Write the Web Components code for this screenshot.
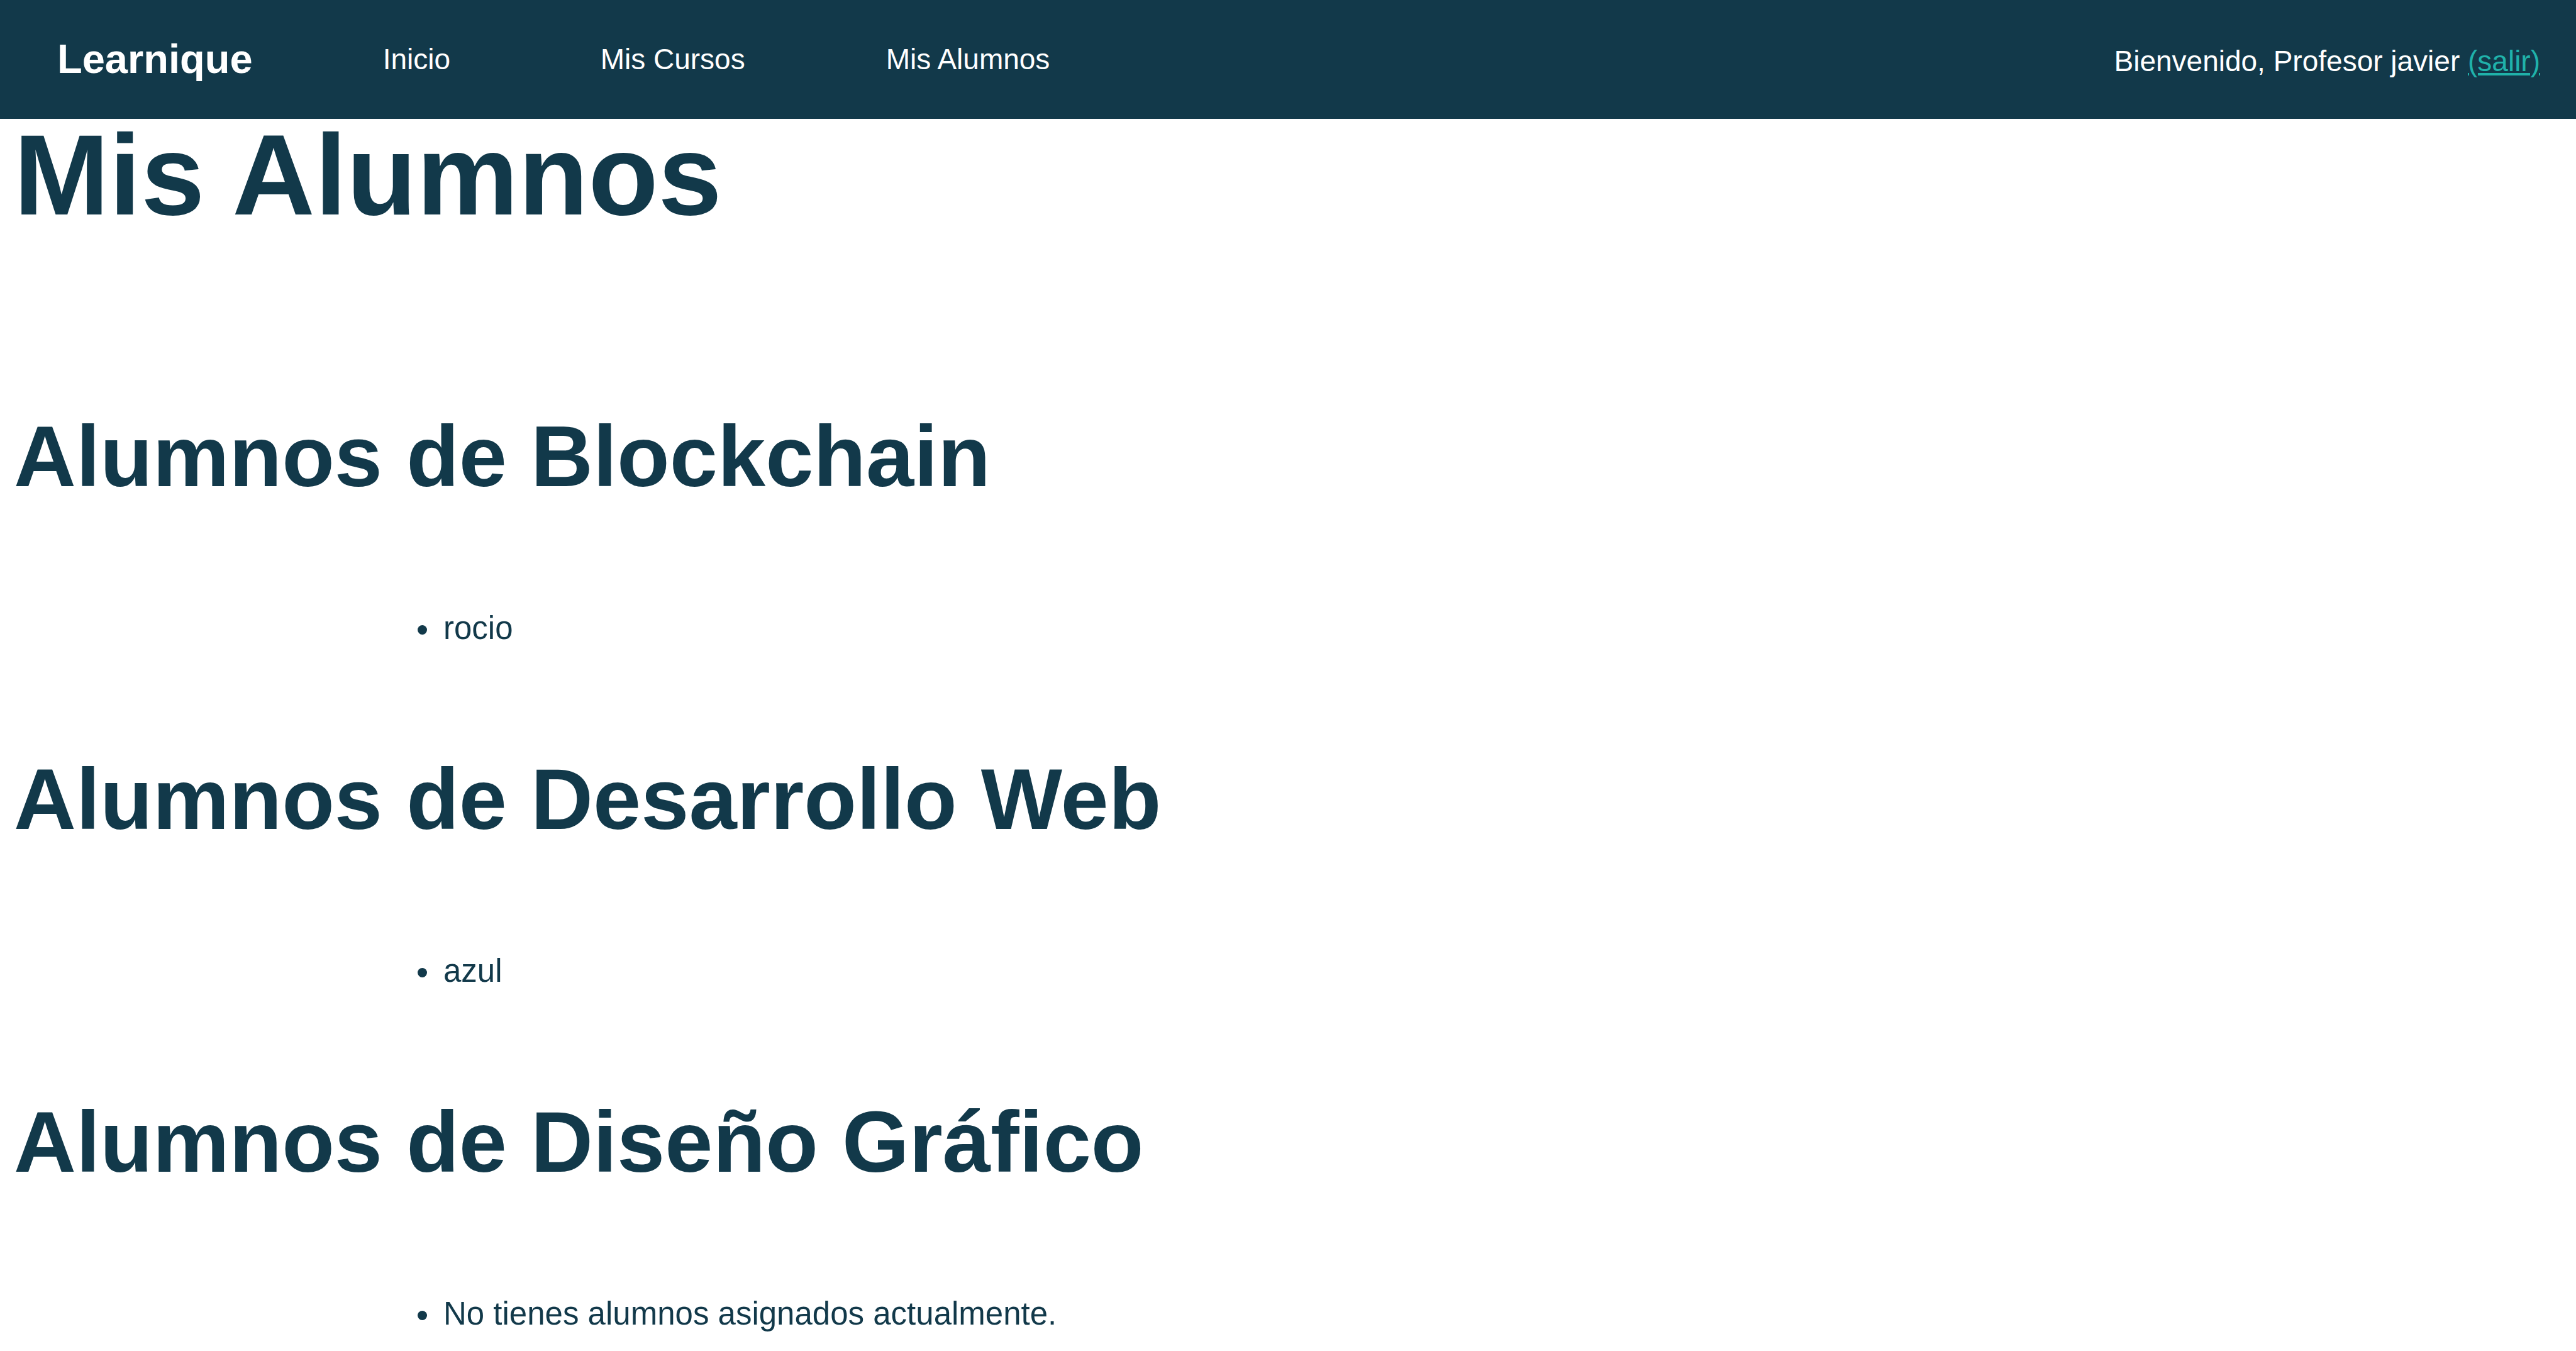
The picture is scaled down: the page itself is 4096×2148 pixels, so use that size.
<!DOCTYPE html>
<html lang="es">
<head>
<meta charset="utf-8">
<title>Learnique - Mis Alumnos</title>
<style>
  :root { --ink: #12394a; --accent: #20b2aa; --gutter: 22px; }
  body { margin: 0; background: #fff; color: var(--ink); font-family: "Liberation Sans", Arial, Helvetica, sans-serif; }
</style>
</head>
<body>
<site-header brand="Learnique">
  <nav-link href="#inicio">Inicio</nav-link>
  <nav-link href="#cursos">Mis Cursos</nav-link>
  <nav-link href="#alumnos">Mis Alumnos</nav-link>
  <user-greeting slot="user" href="#salir">Bienvenido, Profesor javier</user-greeting>
</site-header>
<students-page heading="Mis Alumnos">
  <course-students course="Blockchain" students="rocio"></course-students>
  <course-students course="Desarrollo Web" students="azul"></course-students>
  <course-students course="Diseño Gráfico"></course-students>
</students-page>

<script>
const attach = (el, html) => { el.attachShadow({ mode: "open" }).innerHTML = html; return el.shadowRoot; };

customElements.define("site-header", class extends HTMLElement {
  constructor() {
    super();
    this.root = attach(this, `
      <style>
        :host { display: block; background: var(--ink); color: #fff; }
        header { display: flex; align-items: center; min-height: 189px; padding: 0 57px 2px 91px; box-sizing: border-box; }
        .brand { font-size: 65px; font-weight: bold; }
        nav { display: grid; grid-template-columns: 346px 454px auto; margin-left: 207px; }
        .user { margin-left: auto; }
      </style>
      <header>
        <span class="brand"></span>
        <nav aria-label="Principal"><slot></slot></nav>
        <div class="user"><slot name="user"></slot></div>
      </header>`);
  }
  connectedCallback() { this.root.querySelector(".brand").textContent = this.getAttribute("brand"); }
});

customElements.define("nav-link", class extends HTMLElement {
  constructor() {
    super();
    this.root = attach(this, `
      <style>
        :host { display: block; font-size: 46px; white-space: nowrap; }
        a { color: inherit; text-decoration: none; }
      </style>
      <a><slot></slot></a>`);
  }
  connectedCallback() { this.root.querySelector("a").href = this.getAttribute("href"); }
});

customElements.define("user-greeting", class extends HTMLElement {
  constructor() {
    super();
    this.root = attach(this, `
      <style>
        :host { display: block; font-size: 46px; white-space: nowrap; padding-top: 6px; }
        a { color: var(--accent); text-decoration: underline 4px; text-underline-offset: 3px; }
      </style>
      <slot></slot> <a>(salir)</a>`);
  }
  connectedCallback() { this.root.querySelector("a").href = this.getAttribute("href"); }
});

customElements.define("students-page", class extends HTMLElement {
  constructor() {
    super();
    this.root = attach(this, `
      <style>
        :host { display: block; }
        main { padding: 0 var(--gutter); }
        h1 { margin: 0 0 290px; font-size: 182px; line-height: 178px; }
        .courses { display: flex; flex-direction: column; gap: 173px; }
      </style>
      <main><h1></h1><div class="courses"><slot></slot></div></main>`);
  }
  connectedCallback() { this.root.querySelector("h1").textContent = this.getAttribute("heading"); }
});

customElements.define("course-students", class extends HTMLElement {
  constructor() {
    super();
    this.root = attach(this, `
      <style>
        :host { display: block; }
        h2 { margin: 0 0 175px; font-size: 137px; line-height: 137px; }
        ul { margin: 0; padding-left: 679px; list-style: disc; font-size: 51px; line-height: 60px; }
        li { padding-left: 4px; }
      </style>
      <section><h2></h2><ul></ul></section>`);
  }
  connectedCallback() {
    this.root.querySelector("h2").textContent = "Alumnos de " + this.getAttribute("course");
    const names = (this.getAttribute("students") || "").split(",").filter(Boolean);
    if (!names.length) names.push("No tienes alumnos asignados actualmente.");
    this.root.querySelector("ul").replaceChildren(...names.map(name => {
      const li = document.createElement("li");
      li.textContent = name;
      return li;
    }));
  }
});
</script>
</body>
</html>
